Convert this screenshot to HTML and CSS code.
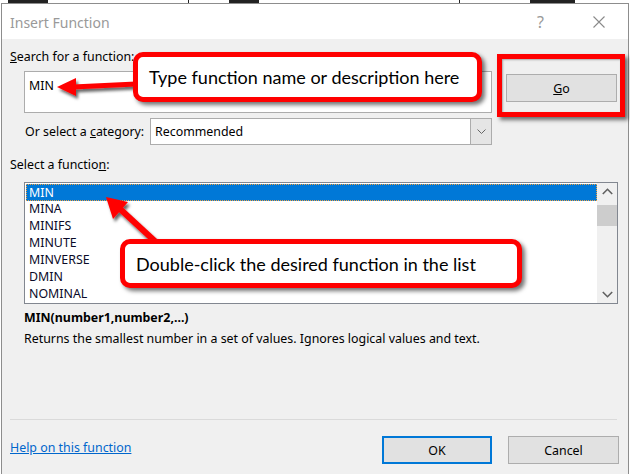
FILE: index.html
```html
<!DOCTYPE html>
<html>
<head>
<meta charset="utf-8">
<link rel="stylesheet" href="styles.css">
</head>
<body>
<div class="page">
  <div class="sheet-strip">
    <span class="mark m1"></span><span class="mark m2"></span><span class="mark m3"></span><span class="mark m4"></span><span class="mark m5"></span>
  </div>
  <div class="dialog">
    <div class="titlebar">
      <span class="title">Insert Function</span>
      <span class="help-q">?</span>
      <svg class="close-x" width="12" height="12" viewBox="0 0 12 12"><path d="M0.5 0.5 L11.5 11.5 M11.5 0.5 L0.5 11.5" stroke="#8a8a8a" stroke-width="1.1" fill="none"/></svg>
    </div>
    <div class="body">
      <div class="label"><u>S</u>earch for a function:</div>
      <div class="search-row">
        <div class="textbox">MIN</div>
        <div class="btn go-btn"><u>G</u>o</div>
      </div>
      <div class="category-row">
        <span class="cat-label">Or select a <u>c</u>ategory:</span>
        <div class="combo">
          <span class="combo-text">Recommended</span>
          <span class="combo-btn"><svg width="9" height="5" viewBox="0 0 9 5"><path d="M0.5 0.5 L4.5 4.5 L8.5 0.5" stroke="#666" stroke-width="1" fill="none"/></svg></span>
        </div>
      </div>
      <div class="label select-label">Select a functio<u>n</u>:</div>
      <div class="listbox">
        <div class="items">
          <div class="item selected">MIN</div>
          <div class="item">MINA</div>
          <div class="item">MINIFS</div>
          <div class="item">MINUTE</div>
          <div class="item">MINVERSE</div>
          <div class="item">DMIN</div>
          <div class="item">NOMINAL</div>
        </div>
        <div class="scrollbar">
          <div class="sb-arrow"><svg width="11" height="7" viewBox="0 0 11 7"><path d="M0.8 6 L5.5 1.3 L10.2 6" stroke="#606060" stroke-width="1.6" fill="none"/></svg></div>
          <div class="sb-track"><div class="sb-thumb"></div></div>
          <div class="sb-arrow"><svg width="11" height="7" viewBox="0 0 11 7"><path d="M0.8 1 L5.5 5.7 L10.2 1" stroke="#606060" stroke-width="1.6" fill="none"/></svg></div>
        </div>
      </div>
      <div class="syntax">MIN(number1,number2,...)</div>
      <div class="desc">Returns the smallest number in a set of values. Ignores logical values and text.</div>
      <div class="separator"></div>
      <div class="footer">
        <span class="help-link">Help on this function</span>
        <div class="footer-btns">
          <div class="btn ok-btn">OK</div>
          <div class="btn cancel-btn">Cancel</div>
        </div>
      </div>
    </div>
  </div>

  <svg class="arrows" width="630" height="474" viewBox="0 0 630 474">
    <defs>
      <filter id="sh" x="-20%" y="-20%" width="160%" height="160%">
        <feDropShadow dx="2" dy="3" stdDeviation="1.5" flood-color="#000" flood-opacity="0.6"/>
      </filter>
    </defs>
    <g filter="url(#sh)" fill="#ff0000" stroke="#ff0000">
      <path d="M136 84 L73 87" stroke-width="5" fill="none"/>
      <polygon points="57,87 76,78 76,96" stroke="none"/>
      <path d="M158 244 L119 208" stroke-width="6" fill="none"/>
      <polygon points="106,197 128,202 113,219" stroke="none"/>
    </g>
  </svg>
  <div class="callout callout-1">Type function name or description here</div>
  <div class="callout callout-2">Double-click the desired function in the list</div>
  <div class="highlight-box"></div>
</div>
</body>
</html>
```
FILE: styles.css
```css
* { box-sizing: border-box; }
html, body { margin: 0; padding: 0; }
body {
  font-family: "Noto Sans", "Open Sans", sans-serif;
  font-size: 12.4px;
  color: #000;
  background: #fff;
}
.page {
  position: relative;
  width: 630px;
  height: 474px;
  overflow: hidden;
  background: #fff;
}
.sheet-strip {
  height: 3px;
  display: flex;
  position: relative;
}
.mark { display: block; height: 3px; background: #222; margin-top: 0; }
.m1 { width: 40px; margin-left: 8px; }
.m2 { width: 1px; margin-left: 140px; }
.m3 { width: 30px; margin-left: 40px; }
.m4 { width: 1px; margin-left: 200px; }
.m5 { width: 45px; margin-left: 70px; }

.dialog {
  margin-left: 1px;
  width: 628px;
  height: 471px;
  border: 1px solid #8d8d8d;
  border-bottom: none;
  display: flex;
  flex-direction: column;
  background: #f0f0f0;
}
.titlebar {
  height: 35px;
  background: #fff;
  display: flex;
  align-items: center;
  padding-left: 8px;
  flex: none;
}
.title {
  font-size: 14px;
  color: #999;
  flex: 1;
  margin-top: 1px;
}
.help-q {
  font-size: 16px;
  color: #999;
  margin-right: 49px;
}
.close-x { margin-right: 23px; }

.body {
  flex: 1;
  padding: 0 9px 0 8px;
}
.label {
  line-height: 16px;
  margin-top: 10px;
}
.search-row {
  display: flex;
  align-items: flex-start;
  margin-top: 6px;
  padding-left: 14px;
}
.textbox {
  width: 468px;
  height: 42px;
  background: #fff;
  border: 1px solid #acacac;
  padding: 6px 0 0 4px;
  line-height: 16px;
}
.btn {
  background: #e1e1e1;
  border: 1px solid #adadad;
  display: flex;
  align-items: center;
  justify-content: center;
  width: 111px;
  height: 28px;
}
.go-btn {
  margin-left: 14px;
  margin-top: 3px;
}
.category-row {
  display: flex;
  align-items: center;
  margin-top: 5px;
  padding-left: 15px;
  height: 27px;
}
.cat-label { width: 125px; }
.combo {
  width: 342px;
  height: 27px;
  background: #fff;
  border: 1px solid #acacac;
  display: flex;
  align-items: center;
}
.combo-text { flex: 1; padding-left: 4px; }
.combo-btn {
  width: 21px;
  height: 25px;
  background: #e5e5e5;
  border-left: 1px solid #acacac;
  display: flex;
  align-items: center;
  justify-content: center;
}
.select-label { margin-top: 12px; }
.listbox {
  margin-top: 9px;
  margin-left: 14px;
  width: 594px;
  height: 122px;
  border: 1px solid #828790;
  background: #fff;
  display: flex;
}
.items {
  flex: 1;
  padding: 1px 0 0 1px;
}
.item {
  height: 17px;
  line-height: 16px;
  padding-left: 3px;
  color: #0a0a28;
}
.item.selected {
  background: #0078d7;
  color: #fff;
  border: 1px dotted #f0a040;
  padding-left: 2px;
  line-height: 15px;
}
.scrollbar {
  width: 20px;
  background: #f0f0f0;
  display: flex;
  flex-direction: column;
}
.sb-arrow {
  height: 17px;
  display: flex;
  align-items: center;
  justify-content: center;
}
.sb-track { flex: 1; padding-top: 5px; }
.sb-thumb { height: 21px; background: #cdcdcd; }
.syntax {
  font-weight: bold;
  margin-top: 6px;
  margin-left: 14px;
  line-height: 16px;
}
.desc {
  margin-top: 5px;
  margin-left: 14px;
  line-height: 16px;
}
.separator {
  margin-top: 72px;
  width: 607px;
  height: 1px;
  background: #dadada;
}
.footer {
  margin-top: 16px;
  display: flex;
  align-items: center;
}
.help-link {
  color: #0066cc;
  text-decoration: underline;
  flex: 1;
  margin-top: -6px;
}
.footer-btns { display: flex; gap: 16px; }
.ok-btn { width: 110px; border: 2px solid #0078d7; }
.cancel-btn { width: 111px; }

.arrows {
  position: absolute;
  left: 0;
  top: 0;
  pointer-events: none;
}
.callout {
  position: absolute;
  background: #fff;
  border: 5px solid #ff0000;
  border-radius: 10px;
  box-shadow: 3px 3px 4px rgba(0,0,0,0.55);
  font-family: Lato, "Noto Sans", sans-serif;
  font-size: 18px;
  white-space: nowrap;
  display: flex;
  align-items: center;
  color: #000;
}
.callout-1 {
  left: 133px;
  top: 52px;
  width: 349px;
  height: 50px;
  padding-left: 11px;
}
.callout-2 {
  left: 120px;
  top: 239px;
  width: 402px;
  height: 49px;
  padding-left: 11px;
  padding-top: 1px;
}
.highlight-box {
  position: absolute;
  left: 497px;
  top: 54px;
  width: 128px;
  height: 63px;
  border: 5px solid #ff0000;
  box-shadow: 3px 3px 4px rgba(0,0,0,0.55), inset 1px 1px 2px rgba(0,0,0,0.3);
}
```
